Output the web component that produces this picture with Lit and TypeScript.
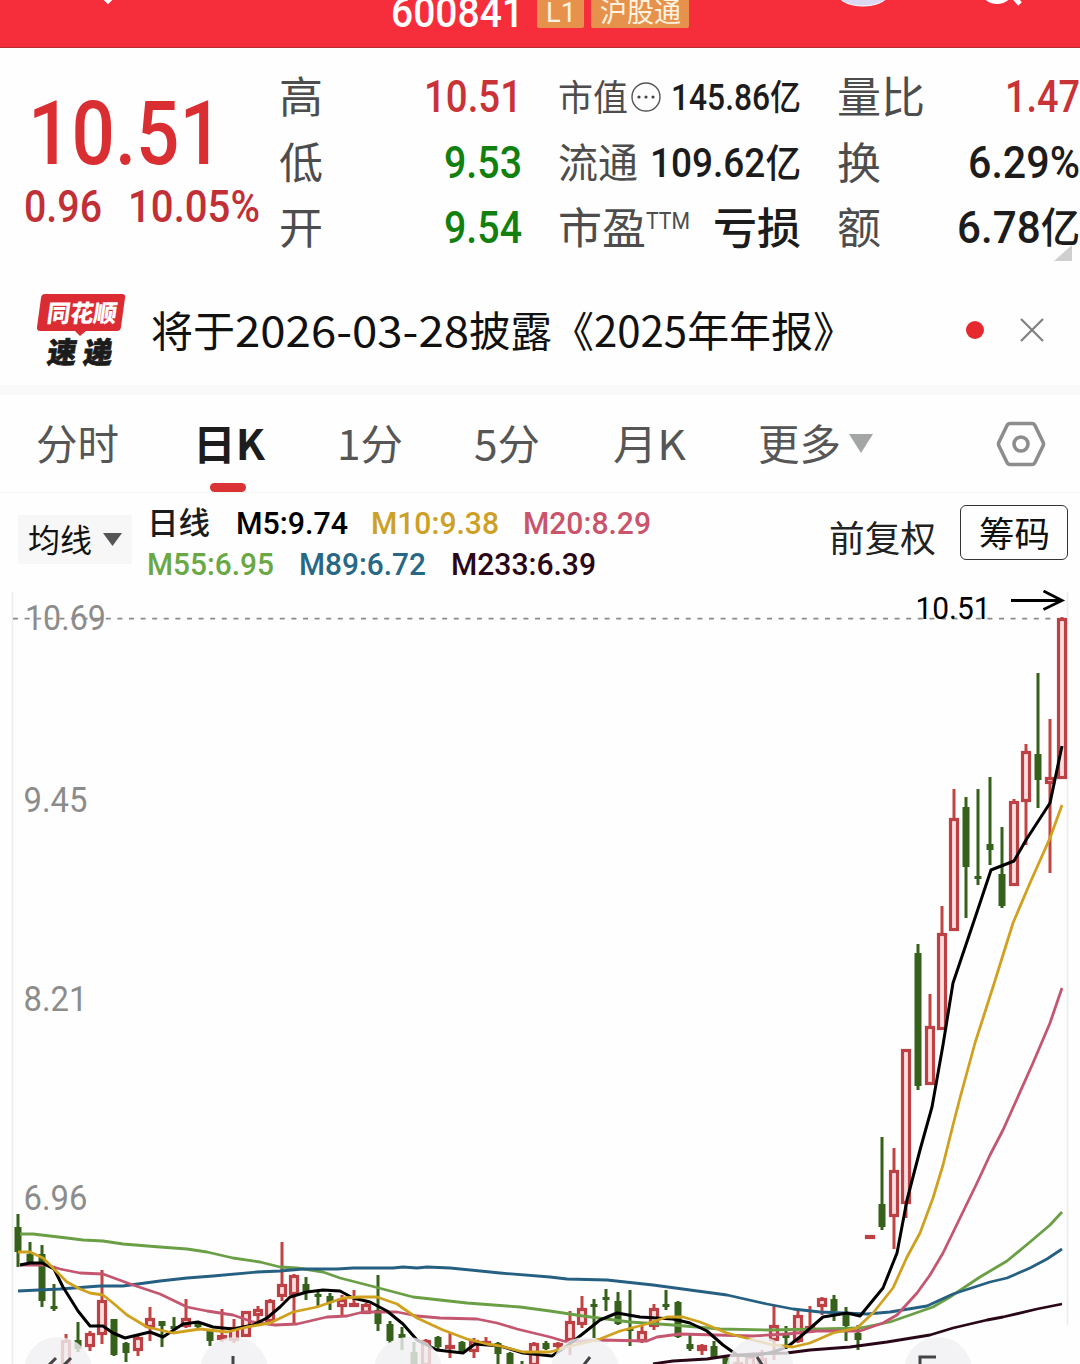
import { LitElement, html, css, svg } from "lit";
import { customElement } from "lit/decorators.js";

type Run = string | { s: string; size: number };

/** One line of text set to an exact advance width; the box is one em high. */
const line = (runs: Run | Run[], width: number, size: number, cls = "") => {
  const list = Array.isArray(runs) ? runs : [runs];
  const base = cls.includes("cjk") ? 0.88 : 0.855;
  return html`<svg class="line ${cls}" width=${width} height=${size}>
    <text y=${size * base} font-size=${size} textLength=${width} lengthAdjust="spacingAndGlyphs">${list.map((r) =>
      typeof r === "string" ? svg`<tspan>${r}</tspan>` : svg`<tspan font-size=${r.size}>${r.s}</tspan>`
    )}</text>
  </svg>`;
};

/* [x, high, body top, body bottom, low, up] */
type Candle = [number, number, number, number, number, 0 | 1];
const CANDLES: Candle[] = [
  [18, 1214, 1227, 1252, 1267, 0], [30, 1242, 1254, 1263, 1264, 0], [42, 1245, 1254, 1301, 1307, 0],
  [54, 1284, 1306, 1309, 1311, 0], [66, 1334, 1340, 1366, 1370, 1], [78, 1322, 1340, 1349, 1352, 0],
  [90, 1331, 1333, 1347, 1351, 1], [102, 1270, 1300, 1335, 1344, 1], [114, 1319, 1319, 1355, 1356, 0],
  [126, 1342, 1343, 1353, 1362, 0], [138, 1336, 1337, 1351, 1356, 1], [150, 1307, 1318, 1328, 1341, 1],
  [162, 1321, 1321, 1326, 1347, 0], [174, 1317, 1326, 1329, 1330, 0], [186, 1299, 1318, 1327, 1328, 1],
  [198, 1322, 1323, 1327, 1329, 0], [210, 1329, 1330, 1341, 1346, 0], [222, 1309, 1335, 1340, 1342, 1],
  [234, 1319, 1327, 1341, 1343, 1], [246, 1311, 1311, 1337, 1337, 1], [258, 1306, 1309, 1316, 1321, 1],
  [270, 1299, 1300, 1322, 1324, 1], [282, 1242, 1284, 1297, 1301, 1], [294, 1274, 1275, 1295, 1323, 1],
  [306, 1277, 1284, 1293, 1300, 0], [318, 1292, 1294, 1296, 1306, 0], [330, 1293, 1296, 1303, 1310, 0],
  [342, 1295, 1299, 1307, 1316, 1], [354, 1290, 1303, 1307, 1307, 1], [366, 1303, 1304, 1314, 1314, 1],
  [378, 1275, 1310, 1324, 1331, 0], [390, 1321, 1324, 1341, 1343, 0], [402, 1327, 1334, 1338, 1350, 0],
  [414, 1342, 1352, 1366, 1368, 0], [426, 1339, 1340, 1366, 1368, 1], [438, 1336, 1337, 1347, 1350, 0],
  [450, 1332, 1345, 1349, 1358, 1], [462, 1341, 1342, 1353, 1354, 0], [474, 1338, 1340, 1352, 1358, 1],
  [486, 1337, 1341, 1345, 1345, 1], [498, 1342, 1343, 1354, 1366, 0], [510, 1352, 1353, 1366, 1368, 0],
  [522, 1361, 1364, 1368, 1368, 0], [534, 1342, 1343, 1366, 1368, 1], [546, 1341, 1343, 1349, 1350, 0],
  [558, 1342, 1343, 1347, 1350, 1], [570, 1311, 1321, 1341, 1355, 1], [582, 1296, 1308, 1325, 1328, 1],
  [594, 1299, 1304, 1306, 1338, 0], [606, 1289, 1297, 1300, 1311, 0], [618, 1292, 1301, 1324, 1325, 0],
  [630, 1290, 1328, 1331, 1346, 0], [642, 1325, 1331, 1342, 1343, 1], [654, 1304, 1308, 1327, 1330, 1],
  [666, 1290, 1304, 1306, 1310, 0], [678, 1301, 1302, 1337, 1338, 0], [690, 1333, 1344, 1349, 1351, 0],
  [702, 1344, 1345, 1351, 1355, 1], [714, 1341, 1346, 1357, 1359, 0], [726, 1357, 1358, 1368, 1368, 0],
  [738, 1356, 1362, 1368, 1368, 1], [750, 1353, 1356, 1368, 1368, 1], [762, 1350, 1358, 1368, 1368, 1],
  [774, 1306, 1325, 1341, 1360, 1], [786, 1326, 1335, 1337, 1347, 0], [798, 1311, 1315, 1342, 1343, 1],
  [810, 1306, 1326, 1328, 1330, 1], [822, 1297, 1298, 1307, 1315, 1], [834, 1295, 1299, 1311, 1321, 0],
  [846, 1307, 1312, 1326, 1341, 0], [858, 1325, 1333, 1340, 1350, 0], [870, 1235, 1235, 1239, 1239, 1],
  [882, 1137, 1204, 1227, 1230, 0], [894, 1148, 1170, 1217, 1249, 1], [906, 1049, 1049, 1204, 1218, 1],
  [918, 944, 953, 1086, 1090, 0], [930, 994, 1026, 1085, 1085, 1], [942, 906, 933, 1030, 1030, 1],
  [954, 789, 818, 931, 931, 1], [966, 797, 807, 867, 918, 0], [978, 789, 876, 878, 885, 0],
  [990, 777, 844, 850, 865, 0], [1002, 827, 874, 906, 908, 0], [1014, 799, 801, 886, 886, 1],
  [1026, 744, 751, 802, 845, 1], [1038, 673, 754, 780, 808, 0], [1050, 719, 777, 784, 873, 1],
  [1062, 617, 618, 779, 779, 1],
];

const AVERAGES = [
  { cls: "m55", pts: "20,1234 33,1234 67,1238 83,1240 103,1241 123,1244 160,1247 187,1249 207,1252 233,1258 260,1262 280,1267 297,1268 323,1272 340,1278 375,1287 413,1297 467,1303 520,1307 550,1311 583,1316 630,1322 673,1325 720,1329 770,1330 820,1329 860,1328 890,1322 933,1307 950,1297 980,1277 1007,1261 1030,1242 1050,1225 1062,1212" },
  { cls: "m89", pts: "18,1291 60,1289 100,1286 123,1286 160,1281 187,1278 213,1276 257,1272 280,1271 303,1269 337,1269 353,1268 393,1268 403,1267 417,1268 427,1267 450,1268 500,1273 550,1277 567,1279 607,1280 653,1285 690,1290 727,1295 767,1304 793,1309 820,1312 867,1314 890,1312 927,1306 953,1294 990,1282 1007,1278 1030,1268 1047,1259 1062,1249" },
  { cls: "m233", pts: "653,1364 673,1361 707,1359 727,1356 753,1354 787,1353 810,1350 850,1347 887,1342 930,1335 953,1328 987,1320 1003,1317 1037,1309 1062,1304" },
  { cls: "m20", pts: "20,1265 47,1265 60,1269 80,1273 103,1274 133,1285 160,1294 187,1307 207,1311 233,1315 253,1322 275,1325 297,1324 327,1317 347,1316 363,1312 397,1312 417,1316 440,1318 477,1319 497,1323 517,1329 550,1337 567,1342 600,1340 647,1341 657,1337 680,1334 753,1336 787,1334 817,1331 860,1331 883,1323 897,1315 917,1293 930,1275 943,1253 960,1218 977,1183 990,1155 1003,1130 1012,1110 1033,1063 1050,1023 1062,988" },
  { cls: "m5", pts: "20,1265 30,1263 42,1263 54,1269 63,1287 78,1311 90,1326 103,1326 113,1333 125,1338 150,1332 163,1337 183,1324 198,1322 213,1327 233,1329 253,1325 267,1318 280,1307 290,1297 307,1292 323,1290 340,1291 353,1298 370,1302 387,1311 403,1324 417,1340 437,1350 463,1353 475,1344 500,1346 523,1353 552,1356 567,1346 580,1336 600,1320 617,1313 640,1317 673,1319 690,1323 707,1331 723,1345 737,1355 753,1356 773,1352 787,1347 800,1337 823,1317 847,1313 860,1316 883,1288 897,1253 907,1200 920,1150 932,1107 943,1045 953,983 977,912 991,870 1014,861 1026,840 1050,803 1062,746" },
  { cls: "m10", pts: "18,1252 30,1252 43,1258 53,1268 67,1282 80,1289 90,1293 103,1295 113,1303 127,1315 147,1327 173,1333 200,1329 227,1332 247,1327 270,1323 293,1312 317,1307 343,1298 360,1297 377,1297 397,1304 417,1318 443,1330 467,1339 487,1344 500,1346 523,1352 550,1352 567,1347 600,1339 620,1331 643,1325 667,1317 683,1317 700,1322 727,1333 753,1340 773,1345 793,1347 810,1343 833,1333 857,1328 873,1313 893,1288 907,1257 920,1233 933,1198 943,1165 953,1125 960,1098 975,1043 993,987 1013,923 1030,883 1050,838 1062,805" },
];

const candle = ([x, hi, top, bot, lo, up]: Candle) => {
  if (!up) {
    const slim = bot - top <= 3;
    return svg`<g class="down"><rect x=${x - 1.5} y=${hi} width="3" height=${lo - hi}/>
      <rect x=${x - 3.5} y=${top} width="7" height=${slim ? 3 : bot - top}/></g>`;
  }
  return svg`<g class="up"><rect class="wick" x=${x - 1.5} y=${hi} width="3" height=${lo - hi}/>
    <rect class="box" x=${x - 3.5} y=${top + 1.5} width="7" height=${Math.max(1, bot - top - 3)}/></g>`;
};

@customElement("k-chart")
export class KChart extends LitElement {
  static styles = css`
    :host { display: block; }
    svg { display: block; font-family: Roboto, "Noto Sans CJK SC", sans-serif; }
    .axis { fill: #8c8c8c; }
    .edge { stroke: #ececec; stroke-width: 1.5; }
    .dash { stroke: #8a8a8a; stroke-width: 1.6; stroke-dasharray: 5 6.6; }
    .arrow { stroke: #000; stroke-width: 2.8; fill: none; }
    .down { fill: #35611a; }
    .up .wick { fill: #c2433f; }
    .up .box { fill: #fbdfe0; stroke: #bd4144; stroke-width: 3.2; }
    .ma { fill: none; stroke-width: 2.8; stroke-linejoin: round; }
    .m5 { stroke: #000; stroke-width: 3; }
    .m10 { stroke: #d0a01f; }
    .m20 { stroke: #c4566f; }
    .m55 { stroke: #6a9f45; }
    .m89 { stroke: #255f82; }
    .m233 { stroke: #2a0718; }
    .pad { fill: #f0f0f2; fill-opacity: 0.8; }
    .glyph { fill: none; stroke: #444; stroke-width: 3; }
  `;
  render() {
    return html`<svg width="1080" height="774" viewBox="0 590 1080 774">
      <path class="edge" d="M12.5 592V1364M1067.5 592V1325"/>
      <path class="dash" d="M13 618.6H1056"/>
      <g class="axis" font-size="34.5">
        <text x="25" y="630" textLength="81" lengthAdjust="spacingAndGlyphs">10.69</text>
        <text x="23.5" y="812" textLength="64" lengthAdjust="spacingAndGlyphs">9.45</text>
        <text x="23.5" y="1011" textLength="64" lengthAdjust="spacingAndGlyphs">8.21</text>
        <text x="23.5" y="1210" textLength="64" lengthAdjust="spacingAndGlyphs">6.96</text>
      </g>
      <text x="915.5" y="619" font-size="31" textLength="75" lengthAdjust="spacingAndGlyphs">10.51</text>
      <path class="arrow" d="M1011 600.5H1061M1043.5 591L1062 600.5L1043.5 609.5"/>
      ${CANDLES.map(candle)}
      ${AVERAGES.map((a) => svg`<polyline class="ma ${a.cls}" points=${a.pts}/>`)}
      ${[58, 234, 408, 585, 760, 938].map((x) => svg`<circle class="pad" cx=${x} cy="1371" r="34"/>`)}
      <path class="glyph" d="M56 1358L48 1366M71 1358L63 1366M233 1356V1364M590 1357L583 1366M757 1357L763 1366M920 1366V1357H936"/>
    </svg>`;
  }
}

@customElement("app-root")
export class AppRoot extends LitElement {
  static styles = css`
    :host { display: block; width: 1080px; height: 1364px; overflow: hidden; background: #fefefe; color: #1c1c1c;
      font-family: Roboto, "Noto Sans CJK SC", sans-serif; }
    svg { display: block; flex: none; }
    .line { overflow: visible; fill: currentColor; }
    .mid { font-weight: 500; }
    .bold { font-weight: 700; }
    .cjk { font-family: "Noto Sans CJK SC", sans-serif; }
    .red { color: #c93338; }
    .green { color: #12800f; }

    header { height: 47px; border-bottom: 1px solid #b92c36; background: #f62e3b; display: flex; overflow: hidden; color: #fff; }
    .back { margin-left: 98px; }
    .code { margin: -9px 0 0 273px; }
    .badge { height: 28px; background: #e7924c; color: #fff3e0; display: flex; justify-content: center; border-radius: 0 0 2px 2px; }
    .l1 { width: 47px; margin-left: 13px; }
    .l1 .line { margin-top: -2px; }
    .link { width: 98px; margin-left: 7px; }
    .link .line { margin-top: -2px; }
    .bot { margin-left: 150px; }
    .find { margin-left: 96px; }

    .quote { height: 237px; display: flex; }
    .hero { width: 279px; flex: none; box-sizing: border-box; padding-top: 40px; color: #d92f33; }
    .price { margin-left: 28px; }
    .delta { display: flex; margin: 7px 0 0 24px; gap: 26px; color: #c13036; }
    .stats { display: grid; grid-template-columns: repeat(3, 243px); grid-auto-rows: 65.5px; column-gap: 36px; padding-top: 16px; }
    .cell { display: flex; align-items: center; justify-content: space-between; }
    .name { display: flex; align-items: center; color: #4d4d4d; }
    .ttm { margin-bottom: 15px; }
    .more { position: relative; }
    .fold { position: absolute; right: 8px; bottom: 0; }

    .news { height: 90px; padding-bottom: 10px; display: flex; align-items: center; border-bottom: 10px solid #f9f9f9; }
    .brand { margin-left: 37px; }
    .headline { margin: 2px 0 0 25px; color: #111; display: flex; width: 696px; flex: none; }
    .dot { width: 18px; height: 18px; border-radius: 50%; background: #e5292f; margin-left: 119px; flex: none; }
    .close { margin-left: 36px; }

    .tabs { height: 97px; display: flex; align-items: center; color: #565656; border-bottom: 1px solid #f4f4f4; }
    .tab { display: flex; align-items: center; height: 97px; }
    .on { color: #1d1d1d; position: relative; }
    .bar { position: absolute; left: 17px; bottom: 0; width: 36px; height: 9px; border-radius: 5px; background: #d93336; }
    .tri { margin-left: 8px; }
    .gear { margin-left: 123px; }
    .active { margin-left: 74px; }

    .ma { height: 97px; display: flex; }
    .pick { width: 114px; height: 49px; margin: 22px 0 0 18px; background: #f7f7f7; display: flex; align-items: center; color: #111; flex: none; }
    .pick .line { margin: 0 11px 0 10px; }
    .legend { margin: 14px 0 0 15px; width: 682px; flex: none; }
    .row { display: flex; height: 41px; }
    .row .cjk { margin-top: 0; }
    .m5 { color: #000; } .m10 { color: #cda026; } .m20 { color: #c9546c; }
    .m55 { color: #6aa846; } .m89 { color: #286887; } .m233 { color: #2a0718; }
    .adj { margin-top: 27px; color: #222; }
    .chips { width: 106px; height: 53px; margin: 12px 0 0 24px; border: 1px solid #333; border-radius: 6px; display: flex; justify-content: center; align-items: center; color: #111; }
    .chips .line { margin-top: 2px; }
  `;

  private cell(name: unknown, value: unknown, extra: unknown = "") {
    return html`<div class="cell ${extra ? "more" : ""}"><div class="name">${name}</div>${value}${extra}</div>`;
  }

  private legend(label: string, width: number, gap: number, cls: string) {
    return html`<div style="padding-left:${gap}px">${line(label, width, 31.5, `mid ${cls}`)}</div>`;
  }

  private tab(label: string, width: number, gap: number) {
    return html`<div class="tab" style="padding-left:${gap}px">${line(label, width, 41.5, "cjk")}</div>`;
  }

  render() {
    return html`
      <header>
        <svg class="back" width="20" height="6"><path d="M4-4.500L10 1.500L16-4.500" fill="none" stroke="#fff" stroke-width="4"/></svg>
        <div class="code">${line("600841", 133, 42, "mid")}</div>
        <div class="badge l1">${line("L1", 30, 28)}</div>
        <div class="badge link">${line("沪股通", 81, 27, "cjk")}</div>
        <svg class="bot" width="48" height="8"><ellipse cx="24" cy="-6" rx="25" ry="12" fill="#dcd8f2" stroke="#fff" stroke-width="1"/></svg>
        <svg class="find" width="46" height="8"><circle cx="14" cy="-14" r="16" fill="none" stroke="#fff" stroke-width="4"/><path d="M30-4L37 4" stroke="#fff" stroke-width="5"/></svg>
      </header>

      <section class="quote">
        <div class="hero">
          <div class="price">${line("10.51", 195, 88.5, "mid")}</div>
          <div class="delta">${line("0.96", 78, 45, "mid")}${line("10.05%", 132, 45, "mid")}</div>
        </div>
        <div class="stats">
          ${this.cell(line("高", 44, 43.5, "cjk"), line("10.51", 98, 45, "mid red"))}
          ${this.cell(
            html`${line("市值", 70, 36, "cjk")}<svg width="34" height="32" viewBox="-18 -16 34 32"><circle r="14" fill="none" stroke="#555" stroke-width="1.4"/><g fill="#444"><circle cx="-7" r="1.6"/><circle r="1.6"/><circle cx="7" r="1.6"/></g></svg>`,
            line(["145.86", { s: "亿", size: 35 }], 130, 36, "mid")
          )}
          ${this.cell(line("量比", 88, 43.5, "cjk"), line("1.47", 75, 45, "mid red"))}
          ${this.cell(line("低", 44, 43.5, "cjk"), line("9.53", 78, 45, "mid green"))}
          ${this.cell(line("流通", 80, 41, "cjk"), line(["109.62", { s: "亿", size: 39 }], 151, 40.5, "mid"))}
          ${this.cell(line("换", 44, 43.5, "cjk"), line("6.29%", 112, 45, "mid"))}
          ${this.cell(line("开", 44, 43.5, "cjk"), line("9.54", 78, 45, "mid green"))}
          ${this.cell(
            html`${line("市盈", 88, 43.5, "cjk")}<span class="ttm">${line("TTM", 44, 23.5)}</span>`,
            line("亏损", 88, 43.5, "cjk mid")
          )}
          ${this.cell(
            line("额", 44, 43.5, "cjk"),
            line(["6.78", { s: "亿", size: 42 }], 123, 45, "mid"),
            html`<svg class="fold" width="18" height="16"><path d="M18 0V16H0Z" fill="#cfcfcf"/></svg>`
          )}
        </div>
      </section>

      <section class="news">
        <svg class="brand" width="89" height="74" viewBox="0 0 89 74">
          <path d="M8 1H85Q89 1 88 5L84 34Q83.500 38 80 38H49L43 43L38 38H3Q-.5 38 0 34L4 5Q4.500 1 8 1Z" fill="#dc2c33"/>
          <g font-family="Noto Sans CJK SC" font-weight="900" transform="skewX(-8)">
            <text x="13" y="29" font-size="24" fill="#fff" textLength="70" lengthAdjust="spacingAndGlyphs">同花顺</text>
            <text x="19" y="70" font-size="29" fill="#1c1c1c" stroke="#1c1c1c" stroke-width=".8" textLength="65">速递</text>
          </g>
        </svg>
        <div class="headline">
          ${line("将于", 84, 42, "cjk")}${line("2026-03-28", 234, 42, "cjk")}${line("披露", 83, 42, "cjk")}${line("《2025年年报》", 303, 42, "cjk")}
        </div>
        <div class="dot"></div>
        <svg class="close" width="24" height="24"><path d="M1 1L23 23M23 1L1 23" stroke="#808080" stroke-width="2.2"/></svg>
      </section>

      <nav class="tabs">
        ${this.tab("分时", 83, 36)}
        <div class="tab on active">${line("日K", 72, 41.5, "cjk bold")}<i class="bar"></i></div>
        ${this.tab("1分", 66, 72)}
        ${this.tab("5分", 66, 71)}
        ${this.tab("月K", 73, 73)}
        ${this.tab("更多", 83, 72)}
        <svg class="tri" width="24" height="20"><path d="M0 0H24L12 19Z" fill="#a3a6a5"/></svg>
        <svg class="gear" width="50" height="48" viewBox="-25 -24 50 48">
          <path d="M-11-20.500H11Q13-20.500 14-18.500L22-2Q23 0 22 2L14 18.500Q13 20.500 11 20.500H-11Q-13 20.500-14 18.500L-22 2Q-23 0-22-2L-14-18.500Q-13-20.500-11-20.500Z" fill="none" stroke="#8d8d8d" stroke-width="3.600"/>
          <circle r="7" fill="none" stroke="#8d8d8d" stroke-width="3.600"/>
        </svg>
      </nav>

      <section class="ma">
        <div class="pick">${line("均线", 64, 32, "cjk")}<svg width="19" height="13"><path d="M0 0H19L9.500 13Z" fill="#555"/></svg></div>
        <div class="legend">
          <div class="row">${line("日线", 63, 31, "cjk mid")}${this.legend("M5:9.74", 112, 26, "m5")}${this.legend("M10:9.38", 128, 23, "m10")}${this.legend("M20:8.29", 128, 24, "m20")}</div>
          <div class="row">${this.legend("M55:6.95", 127, 0, "m55")}${this.legend("M89:6.72", 127, 25, "m89")}${this.legend("M233:6.39", 145, 25, "m233")}</div>
        </div>
        <div class="adj">${line("前复权", 107, 36, "cjk")}</div>
        <div class="chips">${line("筹码", 71, 35.5, "cjk")}</div>
      </section>

      <k-chart></k-chart>
    `;
  }
}
